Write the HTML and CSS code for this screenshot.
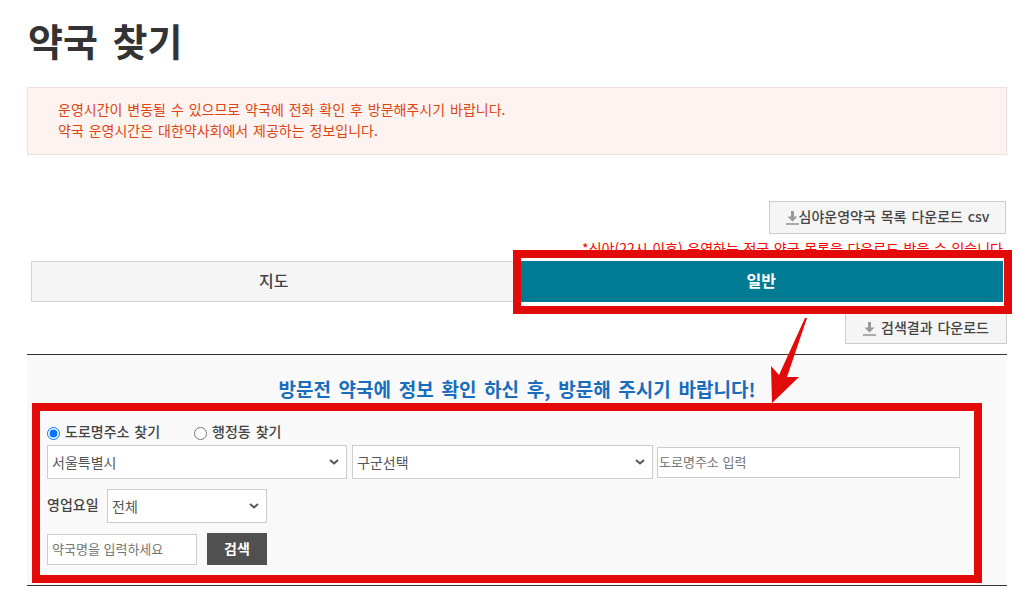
FILE: index.html
```html
<!DOCTYPE html>
<html lang="ko">

	<head>
		<meta charset="UTF-8">
		<title>약국 찾기</title>
		<link rel="stylesheet" href="styles.css">
	</head>

	<body>
		<div class="wrap">
			<h1>약국 찾기</h1>

			<div class="notice">
				<p>운영시간이 변동될 수 있으므로 약국에 전화 확인 후 방문해주시기 바랍니다.</p>
				<p>약국 운영시간은 대한약사회에서 제공하는 정보입니다.</p>
			</div>

			<div class="down-row">
				<a class="btn-down btn-csv" href="javascript:;">
					<svg class="ico" width="13" height="14" viewBox="0 0 13 14"><path d="M5 0h3v5.500h3.500L6.500 10.500 1.500 5.500H5z" fill="#999"/><path d="M0 12h13v2H0z" fill="#aaa"/></svg>심야운영약국 목록 다운로드 csv
				</a>
			</div>
			<p class="note">*심야(22시 이후) 운영하는 전국 약국 목록을 다운로드 받을 수 있습니다</p>

			<ul class="tabs">
				<li><a href="javascript:;">지도</a></li>
				<li class="on"><a href="javascript:;">일반</a></li>
			</ul>

			<div class="down-row down-result">
				<a class="btn-down" href="javascript:;">
					<svg class="ico" width="13" height="14" viewBox="0 0 13 14"><path d="M5 0h3v5.500h3.500L6.500 10.500 1.500 5.500H5z" fill="#999"/><path d="M0 12h13v2H0z" fill="#aaa"/></svg>검색결과 다운로드
				</a>
			</div>

			<div class="panel">
				<h2>방문전 약국에 정보 확인 하신 후, 방문해 주시기 바랍니다!</h2>
				<form class="search">
					<div class="radios">
						<label><input type="radio" name="kind" checked>도로명주소 찾기</label>
						<label><input type="radio" name="kind">행정동 찾기</label>
					</div>
					<div class="addr">
						<select class="sel-city"><option>서울특별시</option></select>
						<select class="sel-gu"><option>구군선택</option></select>
						<input class="inp-road" type="text" placeholder="도로명주소 입력">
					</div>
					<div class="day">
						<strong>영업요일</strong>
						<select class="sel-day"><option>전체</option></select>
					</div>
					<div class="name">
						<input class="inp-name" type="text" placeholder="약국명을 입력하세요">
						<button type="button">검색</button>
					</div>
				</form>
			</div>

			<!-- 빨간 표시 -->
			<div class="mark"></div>
			<svg class="arrow" width="40" height="88" viewBox="0 0 40 88"><path d="M36 1 38 1 18 60 30 60 3 86 2 49 10 58z" fill="#e30a0a"/></svg>
		</div>
	</body>

</html>
```

FILE: styles.css
```css
* {
	margin: 0;
	padding: 0;
	list-style: none;
	box-sizing: border-box;
}

body {
	font-family: "Noto Sans CJK KR", "Liberation Sans", sans-serif;
	font-size: 14px;
	color: #333;
	word-spacing: 1px;
	background: #fff;
}

a {
	color: inherit;
	text-decoration: none;
}

.wrap {
	position: relative;
	width: 980px;
	margin-left: 27px;
	padding-top: 18px;
}

h1 {
	height: 46px;
	padding-left: 1px;
	font-size: 38px;
	line-height: 44px;
	font-weight: bold;
	word-spacing: 4px;
}

.notice {
	height: 68px;
	margin-top: 23px;
	padding: 11px 30px;
	border: 1px solid #eedfdc;
	background: #fdf4f2;
	color: #dd4411;
	font-size: 14px;
	line-height: 21px;
}

.down-row {
	display: flex;
	justify-content: flex-end;
	margin-top: 46px;
	padding-right: 1px;
}

.btn-down {
	display: flex;
	align-items: center;
	justify-content: center;
	height: 33px;
	width: 237px;
	padding-bottom: 3px;
	border: 1px solid #ccc;
	background: #f5f5f5;
	font-weight: 500;
	color: #444;
}

.ico {
	flex: none;
	margin: 4px 5px 0 0;
}

.btn-csv .ico {
	margin-right: 0;
}

.note {
	margin-top: 4px;
	height: 20px;
	padding-right: 4px;
	line-height: 20px;
	text-align: right;
	color: #f00;
	word-spacing: .7px;
}

.tabs {
	display: flex;
	margin: 3px 4px 0;
}

.tabs li {
	flex: 1;
	height: 41px;
	padding-right: 3px;
	border: 1px solid #d5d5d5;
	background: #f5f5f5;
	text-align: center;
	font-size: 16px;
	font-weight: 500;
	line-height: 36px;
	color: #444;
}

.tabs li.on {
	padding-right: 0;
	border: 0;
	background: #007b94;
	color: #fff;
	font-weight: bold;
	line-height: 38px;
}

.down-result {
	margin-top: 10px;
	padding-right: 0;
}

.down-result .btn-down {
	width: 162px;
	height: 32px;
}

.panel {
	height: 232px;
	margin-top: 10px;
	padding: 22px 25px 0 5px;
	border-top: 1px solid #333;
	border-bottom: 1px solid #333;
	background: #f9f9f9;
}

h2 {
	height: 26px;
	margin-right: -20px;
	text-align: center;
	font-size: 19px;
	line-height: 24px;
	color: #1a6dbd;
	word-spacing: 2.400px;
}

.search {
	height: 180px;
	padding: 11px 0 0 7px;
	border: 8px solid #e30a0a;
}

.radios {
	display: flex;
	height: 22px;
	align-items: center;
	font-weight: 500;
	color: #444;
}

.radios label {
	display: flex;
	align-items: center;
	height: 22px;
	margin-right: 34px;
	line-height: 18px;
	padding-bottom: 4px;
}

.radios input {
	width: 13px;
	height: 13px;
	margin: 4px 5px 0 0;
}

select,
input[type="text"] {
	border: 1px solid #ccc;
	background: #fff;
	font-family: inherit;
	color: #555;
}

select {
	height: 34px;
	padding: 0 4px 1px;
	font-size: 14px;
	appearance: none;
	background: #fff url("data:image/svg+xml,%3Csvg xmlns='http://www.w3.org/2000/svg' width='10' height='6'%3E%3Cpath d='M1 1l4 3.500 4-3.500' fill='none' stroke='%23555' stroke-width='2'/%3E%3C/svg%3E") no-repeat right 7px center;
}

input[type="text"] {
	font-size: 13px;
	padding-bottom: 2px;
}

.addr {
	display: flex;
	align-items: center;
	margin-top: 1px;
}

.sel-city {
	width: 300px;
}

.sel-gu {
	width: 301px;
	margin-left: 5px;
}

.inp-road {
	width: 303px;
	height: 31px;
	margin-left: 4px;
	padding-left: 1px;
	padding-right: 1px;
}

.day {
	display: flex;
	align-items: center;
	margin-top: 10px;
}

.day strong {
	width: 60px;
	padding-bottom: 4px;
	color: #444;
	font-size: 14px;
	font-weight: 500;
}

.sel-day {
	width: 160px;
}

.name {
	display: flex;
	align-items: flex-end;
	margin-top: 10px;
}

.inp-name {
	width: 150px;
	height: 31px;
	padding-left: 4px;
	padding-right: 4px;
}

.name button {
	width: 60px;
	height: 32px;
	margin-left: 10px;
	padding-bottom: 2px;
	border: 0;
	background: #505050;
	color: #fff;
	font-family: inherit;
	font-size: 14px;
	font-weight: bold;
}

.mark {
	position: absolute;
	left: 486px;
	top: 250px;
	width: 499px;
	height: 64px;
	border: 8px solid #e30a0a;
}

.arrow {
	position: absolute;
	left: 742px;
	top: 317px;
}
```
